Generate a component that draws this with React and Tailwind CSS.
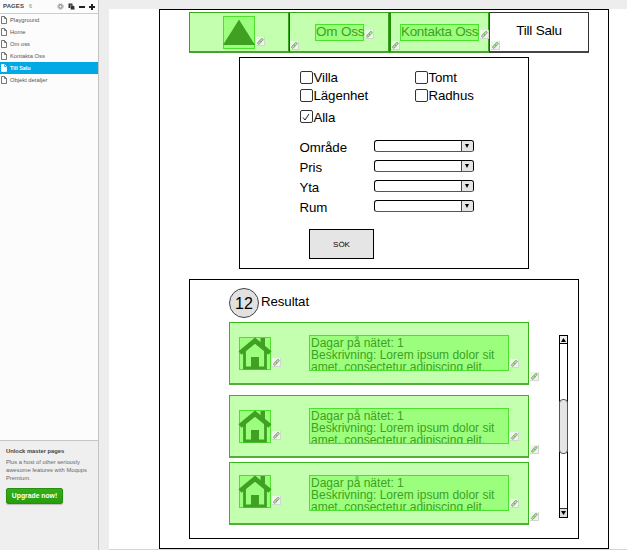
import React from "react";

function LinkBadge({ className }) {
  return (
    <span className={`absolute z-10 block size-[9px] bg-[#f1f3f0] border-r border-b border-[#d5d5d5] ${className}`}>
      <svg viewBox="0 0 9 9" className="block size-[9px]" fill="#b9dcab" stroke="#74ad60" strokeWidth="0.9">
        <rect x="-1.9" y="-1.1" width="3.8" height="2.2" rx="1.1" transform="translate(5.5 3.1) rotate(-45)" />
        <rect x="-1.9" y="-1.1" width="3.8" height="2.2" rx="1.1" transform="translate(3.2 5.6) rotate(-45)" />
      </svg>
    </span>
  );
}

function PageIcon({ active }) {
  return (
    <svg viewBox="0 0 6 8" className="w-[6px] h-[8px] shrink-0" fill={active ? "#fff" : "none"} stroke={active ? "#fff" : "#555"} strokeWidth="0.8">
      <path d="M.5 .5H3.5L5.5 2.5V7.5H.5Z" />
      <path d="M3.5 .5V2.5H5.5" stroke={active ? "#00a8e6" : "#555"} />
    </svg>
  );
}

function Sidebar() {
  const pages = ["Playground", "Home", "Om oss", "Kontakta Oss", "Till Salu", "Objekt detaljer"];
  return (
    <aside className="w-[99px] h-full shrink-0 flex flex-col border-r border-[#c4c4c4] bg-[#fcfcfc] text-[6px] text-[#555]">
      <header className="h-[14px] shrink-0 flex items-center border-b border-[#ccc] pl-[3px] pr-[3px]">
        <span className="text-[6px] font-bold text-[#444] tracking-[0.1px]">PAGES</span>
        <span className="ml-[5px] text-[5.5px] text-[#888]">6</span>
        <span className="ml-auto flex items-center gap-[4px]">
          <svg viewBox="0 0 8 8" className="size-[7px]" fill="none" stroke="#999">
            <circle cx="4" cy="4" r="2" strokeWidth="1.5" />
            <circle cx="4" cy="4" r="3.3" strokeWidth="1" strokeDasharray="1.3 1.3" />
          </svg>
          <svg viewBox="0 0 7 7" className="size-[7px]" fill="#333">
            <path d="M.5 .5H4.5V5H.5Z" />
            <path d="M2.5 2.2H5L6.7 3.7V6.8H2.5Z" stroke="#fff" strokeWidth=".4" />
          </svg>
          <svg viewBox="0 0 6 6" className="size-[6px]"><path d="M0 2H6V4H0Z" fill="#222" /></svg>
          <svg viewBox="0 0 6 6" className="size-[6px]"><path d="M2 0H4V2H6V4H4V6H2V4H0V2H2Z" fill="#222" /></svg>
        </span>
      </header>
      <nav className="flex-1">
        {pages.map((page) => {
          const active = page === "Till Salu";
          return (
            <div key={page} className={`h-[12px] flex items-center gap-[3px] pl-px leading-[12px] ${active ? "bg-[#00a8e6] text-white font-bold text-[5.4px]" : "text-[5.8px]"}`}>
              <PageIcon active={active} />
              <span>{page}</span>
            </div>
          );
        })}
      </nav>
      <footer className="h-[110px] shrink-0 border-t border-[#c4c4c4] bg-[#efefef] pl-[6px] pt-[6px]">
        <p className="font-bold leading-[8px] text-[#444] text-[5.8px] whitespace-nowrap">Unlock master pages</p>
        <p className="mt-[3px] leading-[8px] text-[5.75px] text-[#666] whitespace-nowrap">
          Plus a host of other seriously<br />awesome features with Moqups<br />Premium.
        </p>
        <button className="mt-[6px] block h-[16px] w-[57px] rounded-[2px] border border-[#278f0d] bg-linear-to-b from-[#32b018] to-[#289d0e] text-[6.8px] leading-[14px] font-bold text-white shadow-[0_1px_1px_#bbb] whitespace-nowrap">
          Upgrade now!
        </button>
      </footer>
    </aside>
  );
}

const hotspot = "relative border border-[#4be12d] bg-[#9bff7d] text-[#40a022]";

function NavBar() {
  return (
    <div className="ml-[29px] mt-[2px] flex w-[400px] h-[41px] text-[13.5px] tracking-[-0.2px] leading-[16px]">
      <div className="relative w-[100px] border border-[#37a519] border-b-2 border-b-[#4a9f35] bg-[#c3ffaf] flex pl-[33px] pt-[3px]">
        <div className={`${hotspot} w-[32px] h-[33px]`}>
          <svg viewBox="0 0 30 31" className="block w-[30px] h-[31px] overflow-visible"><path d="M15 2.5L31 28H-1Z" fill="#40a022" /></svg>
          <LinkBadge className="left-[32px] top-[20px]" />
        </div>
        <LinkBadge className="left-[100px] top-[28px]" />
      </div>
      <div className="relative w-[100px] border border-[#37a519] border-l-[#176707] border-b-2 border-b-[#4a9f35] bg-[#c3ffaf] flex pl-[25px] pt-[11px]">
        <div className={`${hotspot} w-[49px] h-[17px] flex items-center whitespace-nowrap leading-[14px] pb-[2px]`}>
          Om Oss
          <LinkBadge className="left-[49px] top-[5px]" />
        </div>
        <LinkBadge className="left-[101px] top-[28px]" />
      </div>
      <div className="relative w-[100px] border border-[#37a519] border-l-2 border-l-[#238c0b] border-b-2 border-b-[#4a9f35] bg-[#c3ffaf] flex pl-[9px] pt-[11px]">
        <div className={`${hotspot} w-[79px] h-[17px] flex items-center whitespace-nowrap leading-[14px] pb-[2px] tracking-[-0.32px]`}>
          Kontakta Oss
          <LinkBadge className="left-[79px] top-[5px]" />
        </div>
        <LinkBadge className="left-[100px] top-[28px]" />
      </div>
      <div className="w-[100px] border border-[#333] border-l-[#176707] border-b-2 border-b-[#444] flex justify-center pt-[10px] whitespace-nowrap">Till Salu</div>
    </div>
  );
}

function Checkbox({ label, checked }) {
  return (
    <label className="flex h-[13px] items-center">
      <span className="size-[13px] shrink-0 rounded-[2px] border border-[#333] flex items-center justify-center">
        {checked && <svg viewBox="0 0 8 8" className="size-[8px]" fill="none" stroke="#222"><path d="M1 4.5L3 7L7 1" /></svg>}
      </span>
      <span className={`ml-[1px] text-[13.3px] leading-[15px] tracking-[-0.1px] whitespace-nowrap ${checked ? "pt-[2px]" : ""}`}>{label}</span>
    </label>
  );
}

function SelectRow({ label }) {
  return (
    <div className="flex h-[20px] items-start">
      <span className="w-[74px] text-[13.3px] leading-[15px] tracking-[-0.1px]">{label}</span>
      <span className="flex w-[100px] h-[12px] rounded-[3px] border border-black border-b-[#555] overflow-hidden bg-white">
        <span className="ml-auto w-[12px] border-l border-[#444] bg-[#e5e5e5] flex items-center justify-center">
          <svg viewBox="0 0 5 5" className="size-[4px]"><path d="M0 0H5L2.5 5Z" fill="#000" /></svg>
        </span>
      </span>
    </div>
  );
}

function SearchForm() {
  return (
    <section className="ml-[79px] mt-[4px] w-[290px] h-[212px] border border-black pl-[59.5px]">
      <div className="flex mt-[13px]">
        <div className="w-[115px] flex flex-col">
          <Checkbox label="Villa" />
          <div className="mt-[5px]"><Checkbox label="Lägenhet" /></div>
          <div className="mt-[8px]"><Checkbox label="Alla" checked /></div>
        </div>
        <div className="flex flex-col gap-[5px]">
          <Checkbox label="Tomt" />
          <Checkbox label="Radhus" />
        </div>
      </div>
      <div className="mt-[17px]">
        {["Område", "Pris", "Yta", "Rum"].map((label) => <SelectRow key={label} label={label} />)}
      </div>
      <button className="ml-[9.5px] mt-[9px] block w-[65px] h-[30px] border border-black bg-[#e5e5e5] text-[8px] pt-[1px]">SÖK</button>
    </section>
  );
}

function ResultCard({ houseTop }) {
  return (
    <article className="relative w-[300px] h-[63px] border border-[#37b519] border-b-2 border-b-[#52b038] bg-[#c3ffaf] flex pl-[9px]">
      <div className={`${hotspot} ${houseTop} w-[32px] h-[33px]`}>
        <svg viewBox="0 0 30 31" className="block w-[30px] h-[31px] overflow-visible" fill="none">
          <path d="M4.5 13V30H25.5V13" stroke="#40a022" strokeWidth="2.8" />
          <path d="M0 15L15 2.6L30 15" stroke="#40a022" strokeWidth="4.8" />
          <path d="M20.5 0H25V10L20.5 6Z" fill="#40a022" />
          <path d="M11 19H19V30H11Z" fill="#40a022" />
        </svg>
        <LinkBadge className="left-[32px] top-[20px]" />
      </div>
      <div className={`${hotspot} ml-[38px] mt-[12px] w-[200px] h-[36px]`}>
        <p className="h-[34px] overflow-hidden pl-[1px] pt-[1px] text-[12px] leading-[12px] whitespace-nowrap">
          Dagar på nätet: 1<br />Beskrivning: Lorem ipsum dolor sit<br />amet, consectetur adipiscing elit.
        </p>
        <LinkBadge className="left-[200px] top-[23px]" />
      </div>
      <LinkBadge className="left-[300px] top-[49px]" />
    </article>
  );
}

function Scrollbar() {
  return (
    <div className="mt-[13px] ml-[30px] w-[9px] h-[183px] border border-black flex flex-col">
      <div className="h-[8px] border-b border-black bg-[#eee] flex items-center justify-center">
        <svg viewBox="0 0 5 4" className="w-[5px] h-[4px]"><path d="M2.5 0L5 4H0Z" /></svg>
      </div>
      <div className="mt-[55px] -mx-px h-[55px] rounded-[4px] border border-[#555] bg-[#e5e5e5]" />
      <div className="mt-auto h-[9px] border-t border-[#333] bg-[#ddd] flex items-center justify-center">
        <svg viewBox="0 0 5 4" className="w-[5px] h-[4px]"><path d="M0 0H5L2.5 4Z" /></svg>
      </div>
    </div>
  );
}

function Results() {
  return (
    <section className="ml-[29px] mt-[10px] w-[390px] h-[260px] border border-black pl-[39px] pt-[8px]">
      <div className="flex h-[34px] items-start">
        <span className="size-[30px] rounded-full border border-[#444] bg-[#e1e1e1] flex items-center justify-center text-[16px] pt-[1px]">12</span>
        <span className="ml-[2px] mt-[6px] text-[13.3px] leading-[16px] tracking-[-0.1px]">Resultat</span>
      </div>
      <div className="flex">
        <div className="flex flex-col">
          <ResultCard houseTop="mt-[14px]" />
          <div className="mt-[10px]"><ResultCard houseTop="mt-[14px]" /></div>
          <div className="mt-[4px]"><ResultCard houseTop="mt-[12px]" /></div>
        </div>
        <Scrollbar />
      </div>
    </section>
  );
}

export default function App() {
  return (
    <div className="flex w-[627px] h-[550px] overflow-hidden bg-[#ededed] font-['Liberation_Sans',Arial,sans-serif] text-black">
      <Sidebar />
      <main className="ml-[10px] mt-[9px] flex-1 h-[541px] border-b border-[#d5d5d5] bg-white">
        <div className="ml-[50px] w-[450px] h-[540px] border border-black">
          <NavBar />
          <SearchForm />
          <Results />
        </div>
      </main>
    </div>
  );
}
